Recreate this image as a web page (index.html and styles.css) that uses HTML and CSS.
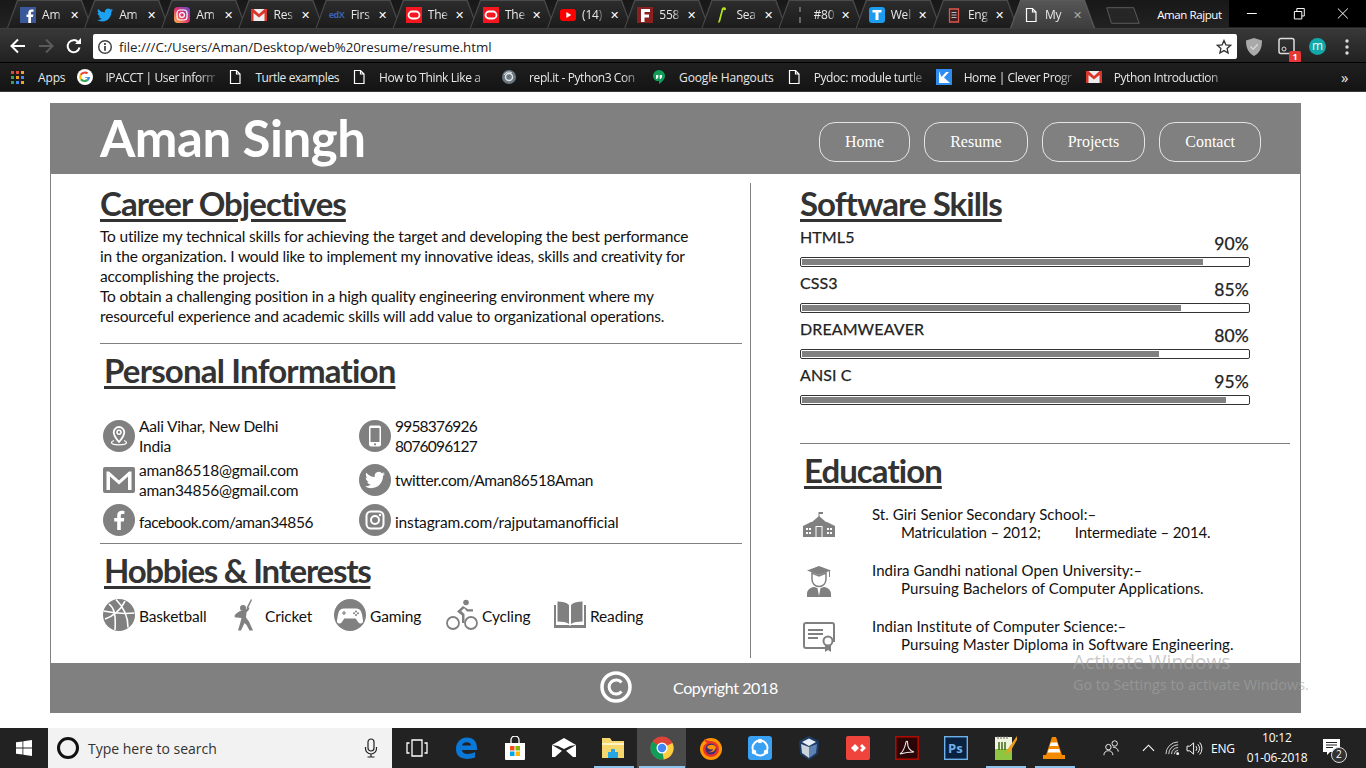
FILE: index.html
```html
<!DOCTYPE html>
<html lang="en">
<head>
<meta charset="utf-8">
<title>My Resume</title>
<link rel="stylesheet" href="styles.css">
</head>
<body>
<svg class="defs" width="0" height="0" aria-hidden="true">
  <symbol id="i-doc" viewBox="0 0 16 16"><path d="M3.500 1.500h6l3.500 3.500v9.500h-9.500zM9.500 1.500v3.500h3.500" fill="none" stroke="#fff" stroke-width="1.200"/></symbol>
  <symbol id="i-gmail" viewBox="0 0 16 16"><path d="M0 2h16v12H0z" fill="#eee"/><path d="M0 2h2.500L8 7l5.500-5H16v12h-2.500V6L8 10.500 2.500 6v8H0z" fill="#d9372c"/></symbol>
  <symbol id="i-oracle" viewBox="0 0 16 16"><path d="M0 0h16v16H0z" fill="#f5161f"/><rect x="2.500" y="4.500" width="11" height="7" rx="3.500" fill="none" stroke="#fff" stroke-width="1.800"/></symbol>
  <symbol id="i-twitter" viewBox="0 0 24 24"><path d="M23.950 4.570a10 10 0 0 1-2.820.77 4.960 4.960 0 0 0 2.160-2.720c-.95.55-2 .96-3.120 1.200a4.920 4.920 0 0 0-8.380 4.480C7.690 8.100 4.070 6.130 1.640 3.160a4.820 4.820 0 0 0-.66 2.470c0 1.710.87 3.210 2.190 4.100a4.900 4.900 0 0 1-2.230-.61v.06c0 2.380 1.690 4.370 3.950 4.820a5 5 0 0 1-2.210.08 4.940 4.940 0 0 0 4.600 3.420A9.870 9.870 0 0 1 0 19.540a14 14 0 0 0 7.560 2.210c9.050 0 14-7.500 14-13.980 0-.21 0-.42-.02-.63a9.940 9.940 0 0 0 2.410-2.570z"/></symbol>
</svg>

<div class="browser">
  <div class="tabstrip">
    <div class="tab"><svg class="fav" viewBox="0 0 16 16"><path d="M0 0h16v16H0z" fill="#3b5998"/><path d="M11 16V10h2l.4-2.500H11V6c0-.8.3-1.200 1.200-1.200h1.300V2.500h-2C9.400 2.500 8.300 3.800 8.300 5.700v1.800H6.500V10h1.800v6z" fill="#fff"/></svg><span class="tab-t">Am</span><span class="tab-x">✕</span></div>
    <div class="tab"><svg class="fav tw-blue"><use href="#i-twitter"/></svg><span class="tab-t">Am</span><span class="tab-x">✕</span></div>
    <div class="tab"><svg class="fav" viewBox="0 0 16 16"><defs><linearGradient id="ig" x1="0" y1="1" x2="1" y2="0"><stop offset="0" stop-color="#fdc04d"/><stop offset=".5" stop-color="#e1306c"/><stop offset="1" stop-color="#5b51d8"/></linearGradient></defs><rect width="16" height="16" rx="4" fill="url(#ig)"/><rect x="3" y="3" width="10" height="10" rx="3" fill="none" stroke="#fff" stroke-width="1.200"/><circle cx="8" cy="8" r="2.400" fill="none" stroke="#fff" stroke-width="1.200"/></svg><span class="tab-t">Am</span><span class="tab-x">✕</span></div>
    <div class="tab"><svg class="fav"><use href="#i-gmail"/></svg><span class="tab-t">Res</span><span class="tab-x">✕</span></div>
    <div class="tab"><span class="fav edx">edX</span><span class="tab-t">Firs</span><span class="tab-x">✕</span></div>
    <div class="tab"><svg class="fav"><use href="#i-oracle"/></svg><span class="tab-t">The</span><span class="tab-x">✕</span></div>
    <div class="tab"><svg class="fav"><use href="#i-oracle"/></svg><span class="tab-t">The</span><span class="tab-x">✕</span></div>
    <div class="tab"><svg class="fav" viewBox="0 0 16 16"><rect y="2" width="16" height="12" rx="3" fill="#f00"/><path d="M6.300 5v6l5-3z" fill="#fff"/></svg><span class="tab-t">(14)</span><span class="tab-x">✕</span></div>
    <div class="tab"><svg class="fav" viewBox="0 0 16 16"><path d="M0 0h16v16H0z" fill="#8b2020"/><path d="M4 2h9v3H7.500v2.500H12v3H7.500V15H4z" fill="#fff"/></svg><span class="tab-t">558</span><span class="tab-x">✕</span></div>
    <div class="tab"><svg class="fav" viewBox="0 0 16 16"><path d="M8 1l2-1-4 15-2 1z" fill="#b5e61d"/><circle cx="10.500" cy="1.800" r="1.500" fill="#b5e61d"/></svg><span class="tab-t">Sea</span><span class="tab-x">✕</span></div>
    <div class="tab"><svg class="fav" viewBox="0 0 16 16"><path d="M7 0h2v16H7z" fill="#666"/><path d="M5.500 5h5v5h-5z" fill="#222"/></svg><span class="tab-t">#80</span><span class="tab-x">✕</span></div>
    <div class="tab"><svg class="fav" viewBox="0 0 16 16"><rect width="16" height="16" rx="3" fill="#1d9bf0"/><path d="M3.500 3h9v2.500H9.500V13h-3V5.500h-3z" fill="#fff"/></svg><span class="tab-t">Wel</span><span class="tab-x">✕</span></div>
    <div class="tab"><svg class="fav" viewBox="0 0 16 16"><path d="M3.500 2h9v13h-9z" fill="#3a2222" stroke="#e0564e" stroke-width="1.300"/><path d="M5.500 5.500h5M5.500 8h5M5.500 10.500h5" stroke="#bbb" stroke-width="1"/></svg><span class="tab-t">Eng</span><span class="tab-x">✕</span></div>
    <div class="tab active"><svg class="fav"><use href="#i-doc"/></svg><span class="tab-t">My</span><span class="tab-x">✕</span></div>
    <svg class="newtab" viewBox="0 0 34 17"><path d="M.7.700h27l5.500 15.600H5.500z" fill="#262626" stroke="#5a5a5a"/></svg>
    <div class="winuser">Aman Rajput</div>
    <div class="winctl">
      <svg viewBox="0 0 46 28"><path d="M18 14.500h10" stroke="#fff"/></svg>
      <svg viewBox="0 0 46 28"><path d="M19.500 12.500h7.500v7.500h-7.500zM22 12.500v-3h7.500v7.500h-2.500" fill="none" stroke="#fff"/></svg>
      <svg viewBox="0 0 46 28"><path d="M18 9.500l10 10M28 9.500l-10 10" stroke="#fff"/></svg>
    </div>
  </div>

  <div class="toolbar">
    <svg class="tb-ic" viewBox="0 0 20 20"><path d="M17 10H4M10 3.500L3.500 10l6.500 6.500" fill="none" stroke="#fff" stroke-width="2"/></svg>
    <svg class="tb-ic" viewBox="0 0 20 20"><path d="M3 10h13M10 3.500l6.500 6.500-6.500 6.500" fill="none" stroke="#5a5a5a" stroke-width="2"/></svg>
    <svg class="tb-ic" viewBox="0 0 20 20"><path d="M15.500 11.500a6 6 0 1 1-1.300-5.300" fill="none" stroke="#fff" stroke-width="2"/><path d="M11 8h6V2z" fill="#fff"/></svg>
    <div class="omnibox">
      <svg class="omni-i" viewBox="0 0 16 16"><circle cx="8" cy="8" r="6.300" fill="none" stroke="#444" stroke-width="1.500"/><path d="M7.100 7h1.800v4.800H7.100zM7.100 4.100h1.800v1.800H7.100z" fill="#444"/></svg>
      <span class="url">file:///C:/Users/Aman/Desktop/web%20resume/resume.html</span>
      <svg class="omni-star" viewBox="0 0 16 16"><path d="M8 1.500l1.900 4.300 4.700.5-3.500 3.100 1 4.600L8 11.600l-4.100 2.400 1-4.600L1.400 6.300l4.700-.5z" fill="none" stroke="#333" stroke-width="1.300"/></svg>
    </div>
    <div class="exts">
      <svg class="ext" viewBox="0 0 20 20"><path d="M10 1l8 2.500c0 7-2 12.500-8 15.500C4 16 2 10.500 2 3.500z" fill="#a9a9a9"/><path d="M6.500 9.500l2.700 2.700 4.500-5" fill="none" stroke="#d5d5d5" stroke-width="1.500"/></svg>
      <div class="ext ext-badge"><svg viewBox="0 0 20 20"><rect x="2" y="1.500" width="15" height="15" rx="2" fill="none" stroke="#ddd" stroke-width="1.500"/><circle cx="7" cy="12" r="2" fill="none" stroke="#ddd"/></svg><span class="badge">1</span></div>
      <div class="ext ext-m">m</div>
      <svg class="ext" viewBox="0 0 20 20"><circle cx="10" cy="4" r="1.700" fill="#ddd"/><circle cx="10" cy="10" r="1.700" fill="#ddd"/><circle cx="10" cy="16" r="1.700" fill="#ddd"/></svg>
    </div>
  </div>

  <div class="bookmarks">
    <div class="bm bm-apps">
      <svg class="bm-i" viewBox="0 0 13 13"><path d="M0 0h3v3H0z" fill="#e04a3a"/><path d="M5 0h3v3H5z" fill="#e04a3a"/><path d="M10 0h3v3h-3z" fill="#f0a32a"/><path d="M0 5h3v3H0z" fill="#37a052"/><path d="M5 5h3v3H5z" fill="#f0a32a"/><path d="M10 5h3v3h-3z" fill="#4285f4"/><path d="M0 10h3v3H0z" fill="#37a052"/><path d="M5 10h3v3H5z" fill="#4285f4"/><path d="M10 10h3v3h-3z" fill="#f0a32a"/></svg>
      <span>Apps</span>
    </div>
    <div class="bm"><svg class="bm-i" viewBox="0 0 16 16"><circle cx="8" cy="8" r="8" fill="#fff"/><path d="M8 8h5a5 5 0 0 1-1.500 3.700L9.700 10c.5-.4.800-.8 1-1.200H8z" fill="#4285f4"/><path d="M4.600 9.600A3.700 3.700 0 0 0 9.700 10l1.800 1.700A6 6 0 0 1 3 11z" fill="#34a853"/><path d="M4.300 8c0 .6.100 1.100.3 1.600L3 11a6 6 0 0 1 0-6l1.600 1.400c-.2.500-.3 1-.3 1.600z" fill="#fbbc05"/><path d="M3 5a6 6 0 0 1 8.200-1.400L9.900 5.200A3.700 3.700 0 0 0 4.600 6.400z" fill="#ea4335"/></svg><span class="bm-t fade">IPACCT | User inform</span></div>
    <div class="bm"><svg class="bm-i"><use href="#i-doc"/></svg><span class="bm-t">Turtle examples</span></div>
    <div class="bm"><svg class="bm-i"><use href="#i-doc"/></svg><span class="bm-t fade">How to Think Like a</span></div>
    <div class="bm"><svg class="bm-i" viewBox="0 0 16 16"><circle cx="8" cy="8" r="7" fill="#6a7680"/><circle cx="8" cy="8" r="3.500" fill="none" stroke="#dfe4e8" stroke-width="1.500"/><path d="M3 6a5.500 5.500 0 0 1 8-2" fill="none" stroke="#dfe4e8"/></svg><span class="bm-t fade">repl.it - Python3 Con</span></div>
    <div class="bm"><svg class="bm-i" viewBox="0 0 16 16"><path d="M8 1a6 6 0 0 1 6 6c0 3.500-3 6-6 8v-3a5 5 0 0 1-6-5 6 6 0 0 1 6-6z" fill="#0f9d58"/><path d="M5 6h2.300v2.300L6 10H5zM8.700 6H11v2.300L9.700 10h-1z" fill="#fff"/></svg><span class="bm-t bm-wide">Google Hangouts</span></div>
    <div class="bm"><svg class="bm-i"><use href="#i-doc"/></svg><span class="bm-t fade">Pydoc: module turtle</span></div>
    <div class="bm"><svg class="bm-i" viewBox="0 0 16 16"><path d="M0 0h16v16H0z" fill="#2f8df0"/><path d="M3 2v12h11L8 8.500 13 3H10L5.500 8z" fill="#fff"/></svg><span class="bm-t fade">Home | Clever Progr</span></div>
    <div class="bm"><svg class="bm-i"><use href="#i-gmail"/></svg><span class="bm-t fade">Python Introduction</span></div>
    <span class="bm-more">»</span>
  </div>
</div>

<div class="page">
  <div class="resume">
    <header class="r-head">
      <h1 class="r-name">Aman Singh</h1>
      <nav class="r-nav">
        <a class="r-btn">Home</a>
        <a class="r-btn">Resume</a>
        <a class="r-btn">Projects</a>
        <a class="r-btn">Contact</a>
      </nav>
    </header>
    <main class="r-body">
      <div class="col-left">
        <section>
          <h2 class="h">Career Objectives</h2>
          <p class="obj">To utilize my technical skills for achieving the target and developing the best performance<br>in the organization. I would like to implement my innovative ideas, skills and creativity for<br>accomplishing the projects.<br>To obtain a challenging position in a high quality engineering environment where my<br>resourceful experience and academic skills will add value to organizational operations.</p>
        </section>
        <hr class="rule rule-a">
        <section>
          <h2 class="h h-in h-per">Personal Information</h2>
          <div class="info">
            <div class="info-c"><svg class="ic" viewBox="0 0 32 32"><circle cx="16" cy="16" r="16" fill="#808080"/><path d="M16 7a5.300 5.300 0 0 0-5.300 5.300c0 3.700 5.300 9.700 5.300 9.700s5.300-6 5.300-9.700A5.300 5.300 0 0 0 16 7z" fill="none" stroke="#fff" stroke-width="1.800"/><circle cx="16" cy="12.300" r="2" fill="none" stroke="#fff" stroke-width="1.500"/><path d="M11 20.500c-1.800.6-2.500 1.300-2.500 2 0 1.300 3.300 2.300 7.500 2.300s7.500-1 7.500-2.300c0-.7-.7-1.400-2.500-2" fill="none" stroke="#fff" stroke-width="1.300"/></svg><div class="info-t">Aali Vihar, New Delhi<br>India</div></div>
            <div class="info-c"><svg class="ic" viewBox="0 0 32 32"><circle cx="16" cy="16" r="16" fill="#808080"/><rect x="10" y="5.500" width="12" height="21" rx="2" fill="#fff"/><path d="M11.500 8h9v14h-9z" fill="#808080"/><circle cx="16" cy="24.300" r="1.100" fill="#808080"/></svg><div class="info-t t-num">9958376926<br>8076096127</div></div>
            <div class="info-c"><svg class="ic" viewBox="0 0 32 32"><rect x="0" y="3" width="32" height="26" rx="2" fill="#808080"/><path d="M3.500 26V7.500h2.500L16 16.500 26 7.500h2.500V26H25V12.500l-9 8-9-8V26z" fill="#fff"/></svg><div class="info-t">aman86518@gmail.com<br>aman34856@gmail.com</div></div>
            <div class="info-c"><svg class="ic" viewBox="0 0 32 32"><circle cx="16" cy="16" r="16" fill="#808080"/><svg x="6" y="6" width="20" height="20" fill="#fff"><use href="#i-twitter"/></svg></svg><div class="info-t t-tight">twitter.com/Aman86518Aman</div></div>
            <div class="info-c"><svg class="ic" viewBox="0 0 32 32"><circle cx="16" cy="16" r="16" fill="#808080"/><path d="M17.800 26V17.500h3l.5-3.500h-3.500v-2.200c0-1 .4-1.700 1.800-1.700h1.800V7c-.4 0-1.400-.2-2.600-.2-2.700 0-4.600 1.600-4.600 4.600V14h-3v3.500h3V26z" fill="#fff"/></svg><div class="info-t t-low t-tight">facebook.com/aman34856</div></div>
            <div class="info-c"><svg class="ic" viewBox="0 0 32 32"><circle cx="16" cy="16" r="16" fill="#808080"/><rect x="7.500" y="7.500" width="17" height="17" rx="4.500" fill="none" stroke="#fff" stroke-width="2"/><circle cx="16" cy="16" r="4" fill="none" stroke="#fff" stroke-width="2"/><circle cx="21" cy="11" r="1.200" fill="#fff"/></svg><div class="info-t t-low t-wide">instagram.com/rajputamanofficial</div></div>
          </div>
        </section>
        <hr class="rule rule-b">
        <section>
          <h2 class="h h-in h-hob">Hobbies &amp; Interests</h2>
          <div class="hobbies">
            <div class="hob"><svg class="ic" viewBox="0 0 32 32"><circle cx="16" cy="16" r="16" fill="#808080"/><path d="M2 20C9 18 18 11 22 2M6 5c5 4 7 9 6 26M13 .5c6 6 12 16 12 28M.5 12c9 2 21 3 31 2" fill="none" stroke="#fff" stroke-width="1.600"/></svg><span>Basketball</span></div>
            <div class="hob"><svg class="ic ic-bat" viewBox="0 0 25 32"><path d="M18 0l1 1-4 8.500-1.500-.8z" fill="#808080"/><circle cx="10" cy="9" r="3" fill="#808080"/><path d="M7 12c-2 1-5 3-5.500 5 0 1 1 1.500 2 1.500l5 .5-1 4-2.500 8.500h3l3.500-7.500 2 2 3 5.500h3.500l-4-9-3-4 .5-5 2.500-3 .5-2-2 .5-3 2z" fill="#808080"/></svg><span>Cricket</span></div>
            <div class="hob"><svg class="ic" viewBox="0 0 32 32"><circle cx="16" cy="16" r="16" fill="#808080"/><path d="M9.500 9.500h13c3 0 4.800 2 5.500 6l1 6c.3 2-.8 3-2.300 3-1.200 0-2-.5-3-2l-2-3H10.300l-2 3c-1 1.500-1.800 2-3 2C3.800 24.500 2.700 23.500 3 21.500l1-6c.7-4 2.500-6 5.500-6z" fill="#fff"/><path d="M10 12v4M8 14h4" stroke="#808080" stroke-width="1.200"/><circle cx="22" cy="12.500" r="1" fill="#808080"/><circle cx="22" cy="16" r="1" fill="#808080"/><circle cx="20" cy="14.300" r="1" fill="#808080"/><circle cx="24" cy="14.300" r="1" fill="#808080"/></svg><span>Gaming</span></div>
            <div class="hob"><svg class="ic" viewBox="0 0 32 32"><circle cx="7" cy="24" r="6" fill="none" stroke="#808080" stroke-width="1.800"/><circle cx="25" cy="24" r="6" fill="none" stroke="#808080" stroke-width="1.800"/><circle cx="20" cy="3.500" r="2.800" fill="#808080"/><path d="M17 7l-6 5.500 5 4v7.500h2.500v-9l-3.300-3 3-2.700 2.800 3.200h6v-2.300h-5z" fill="#808080"/></svg><span>Cycling</span></div>
            <div class="hob"><svg class="ic" viewBox="0 0 32 32"><path d="M0 6h2v20h12c1 0 1.500.3 2 1 .5-.7 1-1 2-1h12V6h2v23H0z" fill="#808080"/><path d="M3.500 2.500c4.500 0 9 .8 11.500 3.500v19c-2.500-1.800-7-2.500-11.500-2.500zM28.500 2.500c-4.500 0-9 .8-11.500 3.500v19c2.500-1.800 7-2.500 11.500-2.500z" fill="#808080"/></svg><span>Reading</span></div>
          </div>
        </section>
      </div>
      <div class="col-right">
        <section>
          <h2 class="h">Software Skills</h2>
          <div class="skill"><div class="sk-head"><span>HTML5</span><span class="sk-pct">90%</span></div><div class="bar"><div class="fill" style="width:90%"></div></div></div>
          <div class="skill"><div class="sk-head"><span>CSS3</span><span class="sk-pct">85%</span></div><div class="bar"><div class="fill" style="width:85%"></div></div></div>
          <div class="skill"><div class="sk-head"><span>DREAMWEAVER</span><span class="sk-pct">80%</span></div><div class="bar"><div class="fill" style="width:80%"></div></div></div>
          <div class="skill"><div class="sk-head"><span>ANSI C</span><span class="sk-pct">95%</span></div><div class="bar"><div class="fill" style="width:95%"></div></div></div>
        </section>
        <hr class="rule rule-c">
        <section>
          <h2 class="h h-in">Education</h2>
          <div class="edu">
            <svg class="ic" viewBox="0 0 32 32"><path d="M15.500 3h1v5h-1z" fill="#808080"/><path d="M16 3h4v2h-4z" fill="#808080"/><path d="M16 7l7 6H9z" fill="#808080"/><path d="M0 17l8-4h16l8 4v11H0z" fill="#808080"/><path d="M12.500 17h7v11h-7z" fill="#fff"/><path d="M13.500 18h5v10h-5z" fill="#808080"/><path d="M3 19h2v2H3zM6 19h2v2H6zM3 23h2v2H3zM6 23h2v2H6zM24 19h2v2h-2zM27 19h2v2h-2zM24 23h2v2h-2zM27 23h2v2h-2z" fill="#fff"/></svg>
            <div class="edu-t">St. Giri Senior Secondary School:–<br><span class="edu-in edu-tight">Matriculation – 2012;<span class="edu-gap"></span>Intermediate – 2014.</span></div>
          </div>
          <div class="edu">
            <svg class="ic" viewBox="0 0 32 32"><path d="M16 1L4 5.500 16 10l12-4.500z" fill="#808080"/><path d="M26 6v6h1V6z" fill="#808080"/><path d="M9 8v6c0 4.500 3 7.500 7 7.500s7-3 7-7.500V8l-7 3z" fill="none" stroke="#808080" stroke-width="1.500"/><path d="M4 32v-3c0-4 3-6.500 7-7l3.500 1L16 31l1.500-8 3.500-1c4 .5 7 3 7 7v3z" fill="#808080"/></svg>
            <div class="edu-t">Indira Gandhi national Open University:–<br><span class="edu-in">Pursuing Bachelors of Computer Applications.</span></div>
          </div>
          <div class="edu">
            <svg class="ic" viewBox="0 0 32 32"><path d="M22 27H3a2 2 0 0 1-2-2V4a2 2 0 0 1 2-2h26a2 2 0 0 1 2 2v17" fill="none" stroke="#808080" stroke-width="2"/><path d="M5 8h15v2H5zM5 12h15v2H5zM5 16h10v2H5z" fill="#808080"/><circle cx="25" cy="20" r="4.500" fill="none" stroke="#808080" stroke-width="2"/><path d="M22 24v7l3-2 3 2v-7z" fill="#808080"/></svg>
            <div class="edu-t">Indian Institute of Computer Science:–<br><span class="edu-in">Pursuing Master Diploma in Software Engineering.</span></div>
          </div>
        </section>
      </div>
    </main>
    <footer class="r-foot">
      <svg class="copy" viewBox="0 0 32 32"><circle cx="16" cy="16" r="14" fill="none" stroke="#fff" stroke-width="3.500"/><path d="M21.500 11.500a7 7 0 1 0 0 9" fill="none" stroke="#fff" stroke-width="3"/></svg>
      <span>Copyright 2018</span>
    </footer>
  </div>
</div>

<div class="activate">
  <div class="act-1">Activate Windows</div>
  <div class="act-2">Go to Settings to activate Windows.</div>
</div>

<div class="taskbar">
  <div class="start"><svg viewBox="0 0 16 16" class="win"><path d="M0 2.300l6.500-.9v6.200H0zM7.300 1.300L16 0v7.600H7.300zM0 8.400h6.500v6.200L0 13.700zM7.300 8.400H16V16l-8.700-1.200z" fill="#fff"/></svg></div>
  <div class="search">
    <span class="cortana"></span>
    <span class="s-text">Type here to search</span>
    <svg class="mic" viewBox="0 0 16 20"><rect x="5" y="1" width="6" height="12" rx="3" fill="none" stroke="#222" stroke-width="1.200"/><path d="M2.500 9v1.500a5.500 5.500 0 0 0 11 0V9M8 16v3M4.500 19h7" fill="none" stroke="#222" stroke-width="1.200"/></svg>
  </div>
  <div class="tk"><svg viewBox="0 0 24 24"><path d="M7 4h10v16H7zM4.500 7H2v10h2.500M19.500 7H22v10h-2.500" fill="none" stroke="#fff" stroke-width="1.300"/></svg></div>
  <div class="tk"><svg viewBox="0 0 24 24"><path d="M2 13C2 6 7 1.500 13 1.500c6 0 10 4 10 10.500v2H8c.3 4 6 5.500 13 2v5.500c-8 3-19 1.500-19-8zM8 9.500h9c0-4-8-4.500-9 0z" fill="#0a78d7"/></svg></div>
  <div class="tk"><svg viewBox="0 0 24 24"><path d="M8 7V4a4 4 0 0 1 8 0v3" fill="none" stroke="#fff" stroke-width="1.300"/><path d="M2 7h20v16a1 1 0 0 1-1 1H3a1 1 0 0 1-1-1z" fill="#fff"/><path d="M7 10h4.500v4.500H7z" fill="#f25022"/><path d="M12.500 10H17v4.500h-4.500z" fill="#7fba00"/><path d="M7 15.500h4.500V20H7z" fill="#00a4ef"/><path d="M12.500 15.500H17V20h-4.500z" fill="#ffb900"/></svg></div>
  <div class="tk"><svg viewBox="0 0 24 24"><path d="M0 9l12-7 12 7v12H0z" fill="#fff"/><path d="M0 9l12 7L24 9l-6 1-6 3-6-3z" fill="#222"/><path d="M3 21l9-8 9 8" fill="#222"/></svg></div>
  <div class="tk run"><svg viewBox="0 0 24 24"><path d="M1 2h8l2 3h12v17H1z" fill="#f5d76e"/><path d="M1 7h22v2H1z" fill="#fff3c4"/><path d="M7 22v-6h3v-3h4v3h3v6z" fill="#29a5e2"/></svg></div>
  <div class="tk run on"><svg viewBox="0 0 24 24"><circle cx="12" cy="12" r="11.500" fill="#db4437"/><path d="M12 12L22.500 7a11.500 11.500 0 0 1-9 16.500z" fill="#ffcd40"/><path d="M12 12L13.500 23.500A11.500 11.500 0 0 1 2.500 5.500z" fill="#0f9d58"/><circle cx="12" cy="12" r="5.500" fill="#fff"/><circle cx="12" cy="12" r="4.200" fill="#4285f4"/></svg></div>
  <div class="tk"><svg viewBox="0 0 24 24"><circle cx="12" cy="13" r="11" fill="#ff9500"/><path d="M5 2c1 3 4 2 6 3 5 0 9 3 9 8 0 4-3 8-8 8-5 0-8-4-8-8 0-3 2-5 4-6-1-1-3-2-3-5z" fill="#e8332a"/><circle cx="12" cy="13" r="5.500" fill="#3d2b78"/><path d="M8 11c2-3 7-3 9 0-1 5-5 6-8 5 3 0 5-1 5-3-2 1-5 0-6-2z" fill="#ff9500"/></svg></div>
  <div class="tk"><svg viewBox="0 0 24 24"><rect x="0" y="0" width="24" height="24" rx="3" fill="#3aa0f2"/><circle cx="12" cy="12" r="7.500" fill="none" stroke="#fff" stroke-width="2"/><circle cx="12" cy="5" r="2.300" fill="#fff"/><circle cx="6" cy="16" r="2.300" fill="#fff"/><circle cx="18" cy="16" r="2.300" fill="#fff"/></svg></div>
  <div class="tk"><svg viewBox="0 0 24 24"><path d="M12 0l10 5-1 13-9 6-9-6L2 5z" fill="#1d3a63"/><path d="M12 2.500l7 3.500-7 4-7-4z" fill="#e8eef5"/><path d="M12 11v11l-7-5-1-9z" fill="#cbd3dd"/><path d="M12 11v11l7-5 1-9z" fill="#5d83b5"/></svg></div>
  <div class="tk"><svg viewBox="0 0 24 24"><rect width="24" height="24" rx="2" fill="#ef443b"/><path d="M9 8l4 4-4 4-4-4zM16 8l4 4-4 4-2-2 2-2-2-2z" fill="#fff"/></svg></div>
  <div class="tk"><svg viewBox="0 0 24 24"><rect x=".8" y=".8" width="22.400" height="22.400" fill="#2a0606" stroke="#b30b00" stroke-width="1.500"/><path d="M5 18c3-2 5-7 6-12 .3-1 1.500-1 1.500 0 0 5 2.500 9 6.500 10-4 0-9 .5-14 2z" fill="none" stroke="#e8e8e8" stroke-width="1.100"/></svg></div>
  <div class="tk"><svg viewBox="0 0 24 24"><rect x=".7" y=".7" width="22.600" height="22.600" fill="#0a2240" stroke="#6db0ea" stroke-width="1.400"/><text x="4" y="17" class="ps-t">Ps</text></svg></div>
  <div class="tk run"><svg viewBox="0 0 24 24"><path d="M2 1h17v23H2z" fill="#f0f3e0"/><path d="M2 13h17v11H2z" fill="#8ec641"/><path d="M5 0v3M8 0v3M11 0v3M14 0v3" stroke="#666"/><path d="M6 6v8M9 6v8M12 6v8" stroke="#3d6a10" stroke-width="1.500"/><path d="M24 0l-10 14-1 4 4-2L25 2z" fill="#e8a020"/></svg></div>
  <div class="tk run"><svg viewBox="0 0 24 24"><path d="M10 1h4l6 18h-16z" fill="#f48a00"/><path d="M8.800 6.500h6.400l1 3.500H7.800zM6.800 13h10.400l1 3.500H5.800z" fill="#fff"/><path d="M1 19h22v4H1z" fill="#f48a00"/></svg></div>
  <div class="tray">
    <svg class="tr-p" viewBox="0 0 20 20"><circle cx="13" cy="5" r="3" fill="none" stroke="#fff"/><circle cx="6" cy="9" r="3" fill="none" stroke="#fff"/><path d="M1 18c0-3 2-5 5-5s5 2 5 5M11 9c3 0 6 2 6 5" fill="none" stroke="#fff"/></svg>
    <svg class="tr-c" viewBox="0 0 14 8"><path d="M1 7l6-6 6 6" fill="none" stroke="#fff" stroke-width="1.200"/></svg>
    <svg class="tr-w" viewBox="0 0 16 16"><path d="M1 14a13 13 0 0 1 13-13M4 14A10 10 0 0 1 14 4M7 14a7 7 0 0 1 7-7M10 14a4 4 0 0 1 4-4" fill="none" stroke="#ddd"/><circle cx="13.500" cy="13.500" r="1.500" fill="#fff"/></svg>
    <svg class="tr-s" viewBox="0 0 18 16"><path d="M1 5.500h3L8 2v12L4 10.500H1z" fill="none" stroke="#fff"/><path d="M10.500 5.500a4 4 0 0 1 0 5M12.500 3.500a7 7 0 0 1 0 9M14.500 1.500a10 10 0 0 1 0 13" fill="none" stroke="#fff"/></svg>
    <span class="tr-l">ENG</span>
    <div class="clock"><div>10:12</div><div>01-06-2018</div></div>
    <div class="notif"><svg viewBox="0 0 20 20"><path d="M1 2h17v13H8l-3 3v-3H1z" fill="#fff"/><path d="M4 5.500h11M4 8h11M4 10.500h7" stroke="#222"/></svg><span class="notif-n">2</span></div>
  </div>
</div>
</body>
</html>
```

FILE: styles.css
```css
* { box-sizing: border-box; }
html, body { margin: 0; height: 768px; overflow: hidden; }
body { display: flex; flex-direction: column; width: 1366px; background: #fff; font-family: "Lato", "Open Sans", sans-serif; position: relative; }
.defs { position: absolute; }
h1, h2, p { margin: 0; }

/* Browser chrome */
.browser { flex: none; height: 92px; background: #1b1b1b; font-family: "Open Sans", sans-serif; color: #e8e8e8; }
.tabstrip { height: 29px; display: flex; padding-left: 7px; background: linear-gradient(#181818, #222); border-bottom: 1px solid #3e3e3e; }
.tab { position: relative; flex: none; width: 85px; height: 28px; margin-right: -7.850px; display: flex; align-items: center; padding: 1px 0 0 13px; font-size: 12px; }
.tab::before { content: ""; position: absolute; inset: 0; background: #4b4b4b; clip-path: polygon(0 100%, 10px 0, calc(100% - 10px) 0, 100% 100%); }
.tab::after { content: ""; position: absolute; inset: 1px 1px 0; background: linear-gradient(#2c2c2c, #1c1c1c); clip-path: polygon(0 100%, 10px 0, calc(100% - 10px) 0, 100% 100%); }
.tab > * { position: relative; z-index: 1; }
.tab.active { z-index: 2; }
.tab.active::before { background: #5a5a5a; }
.tab.active::after { background: linear-gradient(#565656, #3c3c3c); inset: 1px 1px -1px; }
.fav { flex: none; width: 16px; height: 16px; }
.tw-blue { fill: #1da1f2; }
.edx { font-size: 9px; font-weight: 700; color: #3a5fb0; line-height: 16px; letter-spacing: -.5px; white-space: nowrap; }
.tab-t { width: 20px; margin-left: 6px; white-space: nowrap; letter-spacing: -.2px; -webkit-mask-image: linear-gradient(90deg, #000 75%, rgba(0,0,0,.3)); mask-image: linear-gradient(90deg, #000 75%, rgba(0,0,0,.3)); }
.tab-x { margin-left: 5px; width: 14px; font-size: 11px; text-align: center; color: #fff; }
.tab.active .tab-x { color: #aaa; }
.newtab { flex: none; width: 34px; height: 17px; margin: 7px 0 0 19px; }
.winuser { margin-left: 17px; width: 73px; line-height: 30px; font-size: 11.500px; color: #fff; letter-spacing: -.4px; white-space: nowrap; }
.winctl { margin-left: auto; width: 137px; height: 28px; margin-top: -1px; background: #000; display: flex; }
.winctl svg { flex: 1; }
.toolbar { height: 33px; display: flex; align-items: center; background: linear-gradient(#383838, #212121); padding-left: 8px; }
.tb-ic { flex: none; width: 20px; height: 20px; margin-right: 8px; }
.omnibox { flex: none; margin-left: 1px; width: 1144px; height: 25px; background: #fff; border-radius: 2px; display: flex; align-items: center; padding-left: 4px; color: #222; margin-top: 2px; }
.omni-i { width: 16px; height: 16px; flex: none; }
.url { font-size: 13.330px; margin-left: 6px; letter-spacing: -.05px; }
.omni-star { width: 16px; height: 16px; margin-left: auto; margin-right: 5px; }
.exts { flex: 1; display: flex; align-items: center; position: relative; padding-left: 7px; gap: 11px; margin-top: 2px; }
.ext { flex: none; width: 20px; height: 20px; position: relative; }
.ext-badge { margin-left: 2px; }
.badge { position: absolute; right: -4px; bottom: -6px; width: 12px; height: 12px; background: #e53935; color: #fff; font-size: 9px; font-weight: 700; line-height: 12px; text-align: center; border-radius: 2px; }
.ext-m { width: 17px; height: 17px; margin-left: 1px; border-radius: 50%; background: #13a8a8; color: #e8fafa; font-size: 12px; line-height: 15px; text-align: center; }
.bookmarks { height: 30px; display: flex; align-items: center; background: linear-gradient(#1f1f1f, #141414); border-top: 1px solid #000; border-bottom: 1px solid #3a3a3a; font-size: 12px; padding-left: 11px; position: relative; letter-spacing: -.4px; }
.bm { display: flex; align-items: center; flex: none; padding-right: 12px; white-space: nowrap; }
.bm-i { flex: none; width: 16px; height: 16px; margin-right: 12px; }
.bm-apps { padding-right: 12px; letter-spacing: -.15px; }
.bm-apps .bm-i { width: 13px; height: 13px; margin-right: 14px; }
.bm-t { max-width: 110px; white-space: nowrap; }
.bm-wide { letter-spacing: -.13px; }
.fade { width: 110px; -webkit-mask-image: linear-gradient(90deg, #000 85%, rgba(0,0,0,.25)); mask-image: linear-gradient(90deg, #000 85%, rgba(0,0,0,.25)); }
.bm-more { margin-left: auto; margin-right: 18px; font-size: 15px; }

/* Resume */
.page { flex: none; height: 636px; padding: 11px 0 0 50px; }
.resume { width: 1251px; }
.r-head { height: 71px; background: #808080; display: flex; align-items: center; justify-content: space-between; padding: 0 40px 0 50px; }
.r-name { font-size: 51px; font-weight: 700; color: #fff; letter-spacing: -.5px; line-height: 71px; margin-top: -3px; }
.r-nav { display: flex; gap: 14px; margin-top: 7px; }
.r-btn { height: 40px; padding: 0 25px; border: 1px solid #e4e4e4; border-radius: 16px; color: #fff; font: 16px/38px "Liberation Serif", serif; }
.r-body { height: 489px; display: flex; padding: 9px 0 5px; border-left: 1px solid #808080; border-right: 1px solid #808080; color: #111; }
.col-left { width: 700px; padding: 0 8px 0 49px; border-right: 1px solid #808080; }
.col-right { flex: 1; padding: 0 10px 0 49px; }
.h { font-size: 33px; line-height: 41px; height: 44px; font-weight: 700; color: #333; letter-spacing: -.95px; text-decoration: underline; text-decoration-thickness: 3px; text-underline-offset: 3px; white-space: nowrap; }
.h-in { margin-left: 4px; line-height: 43px; }
.h-per { letter-spacing: -.8px; }
.h-hob { letter-spacing: -1.250px; }
.obj { font-size: 15.500px; line-height: 20px; letter-spacing: -.18px; white-space: nowrap; margin: -1px 0 1px; }
.rule { border: 0; border-top: 1px solid #808080; margin: 0; }
.rule-a { margin: 17px 0 5px; }
.rule-b { margin: 7px 0 5px; }
.rule-c { margin: 32px 0 5px; }
.info { margin: 23px 0 0 3px; display: grid; grid-template-columns: 256px 1fr; grid-template-rows: 40px 40px 32px; row-gap: 4px; }
.info-c { display: flex; align-items: center; gap: 4px; font-size: 15.500px; line-height: 20px; letter-spacing: -.2px; white-space: nowrap; }
.ic { flex: none; width: 32px; height: 32px; }
.t-num { letter-spacing: -.8px; }
.t-tight { letter-spacing: -.42px; }
.t-wide { letter-spacing: -.13px; }
.t-low { padding-top: 4px; }
.hobbies { margin: 5px 0 0 3px; display: grid; grid-template-columns: 130px 101px 112px 108px auto; font-size: 15.500px; letter-spacing: -.15px; }
.hob { display: flex; align-items: center; gap: 4px; height: 34px; white-space: nowrap; }
.hob span { padding-top: 2px; }
.ic-bat { width: 25px; margin-right: 3px; }
.skill { height: 46px; width: 450px; }
.sk-head { height: 30px; display: flex; justify-content: space-between; font-size: 16px; line-height: 20px; color: #222; letter-spacing: .1px; -webkit-text-stroke: .25px #222; }
.sk-pct { margin-top: 7px; font-size: 17.500px; padding-right: 1px; }
.bar { height: 10px; padding: 1px; border: 1px solid #333; border-radius: 2px; }
.fill { height: 100%; background: #808080; }
.edu { display: grid; grid-template-columns: 69px 1fr; margin: 0 0 18px 3px; height: 38px; font-size: 15px; line-height: 18px; letter-spacing: .05px; white-space: nowrap; }
.edu:first-of-type { margin-top: 12px; }
.edu .ic { margin-top: 4px; }
.edu-in { margin-left: 29px; }
.edu-tight { letter-spacing: -.15px; }
.edu-gap { display: inline-block; width: 34px; }
.r-foot { height: 50px; background: #808080; display: flex; align-items: center; color: #fff; font-size: 16px; padding: 0 0 2px 550px; letter-spacing: -.4px; }
.copy { width: 32px; height: 32px; margin-right: 41px; flex: none; }

/* Watermark over the page */
.activate { position: absolute; left: 1073px; top: 654px; color: rgba(165, 165, 165, .6); font-family: "Open Sans", sans-serif; white-space: nowrap; }
.act-1 { font-size: 19.200px; line-height: 16px; }
.act-2 { font-size: 14.400px; line-height: 22px; margin-top: 4px; }

/* Taskbar */
.taskbar { flex: none; height: 40px; background: #222; display: flex; color: #fff; font-family: "Open Sans", sans-serif; }
.start { width: 48px; display: flex; align-items: center; justify-content: center; }
.win { width: 16px; height: 16px; }
.search { width: 344px; background: #f2f2f2; display: flex; align-items: center; padding-left: 9px; color: #333; font-size: 14px; }
.cortana { width: 22px; height: 22px; border: 3px solid #111; border-radius: 50%; margin-right: 9px; }
.mic { width: 16px; height: 20px; margin-left: auto; margin-right: 13px; }
.tk { flex: none; width: 49px; display: flex; align-items: center; justify-content: center; position: relative; }
.tk svg { width: 24px; height: 24px; }
.tk.run::after { content: ""; position: absolute; left: 6px; right: 3px; bottom: 0; height: 2px; background: #8cc4ee; }
.tk.on { background: #4a4a4a; }
.tk.on::after { left: 2px; right: 1px; }
.ps-t { font: 700 13px "Open Sans", sans-serif; fill: #6db0ea; }
.tray { flex: 1; display: flex; align-items: center; position: relative; padding-left: 25px; font-size: 12px; }
.tr-p { width: 18px; height: 18px; flex: none; }
.tr-c { width: 13px; height: 8px; flex: none; margin-left: 21px; }
.tr-w { width: 15px; height: 15px; flex: none; margin-left: 10px; }
.tr-s { width: 17px; height: 15px; flex: none; margin-left: 6px; }
.tr-l { margin-left: 8px; letter-spacing: -.2px; white-space: nowrap; }
.clock { margin-left: 12px; width: 60px; flex: none; text-align: center; line-height: 20px; letter-spacing: -.2px; white-space: nowrap; }
.notif { position: relative; margin-left: 15px; width: 20px; height: 20px; margin-top: -2px; flex: none; }
.notif svg { width: 20px; height: 20px; display: block; }
.notif-n { position: absolute; right: -5px; bottom: -6px; width: 16px; height: 16px; border: 1.500px solid #ddd; background: #333; border-radius: 50%; font-size: 10px; line-height: 13px; text-align: center; }
```
